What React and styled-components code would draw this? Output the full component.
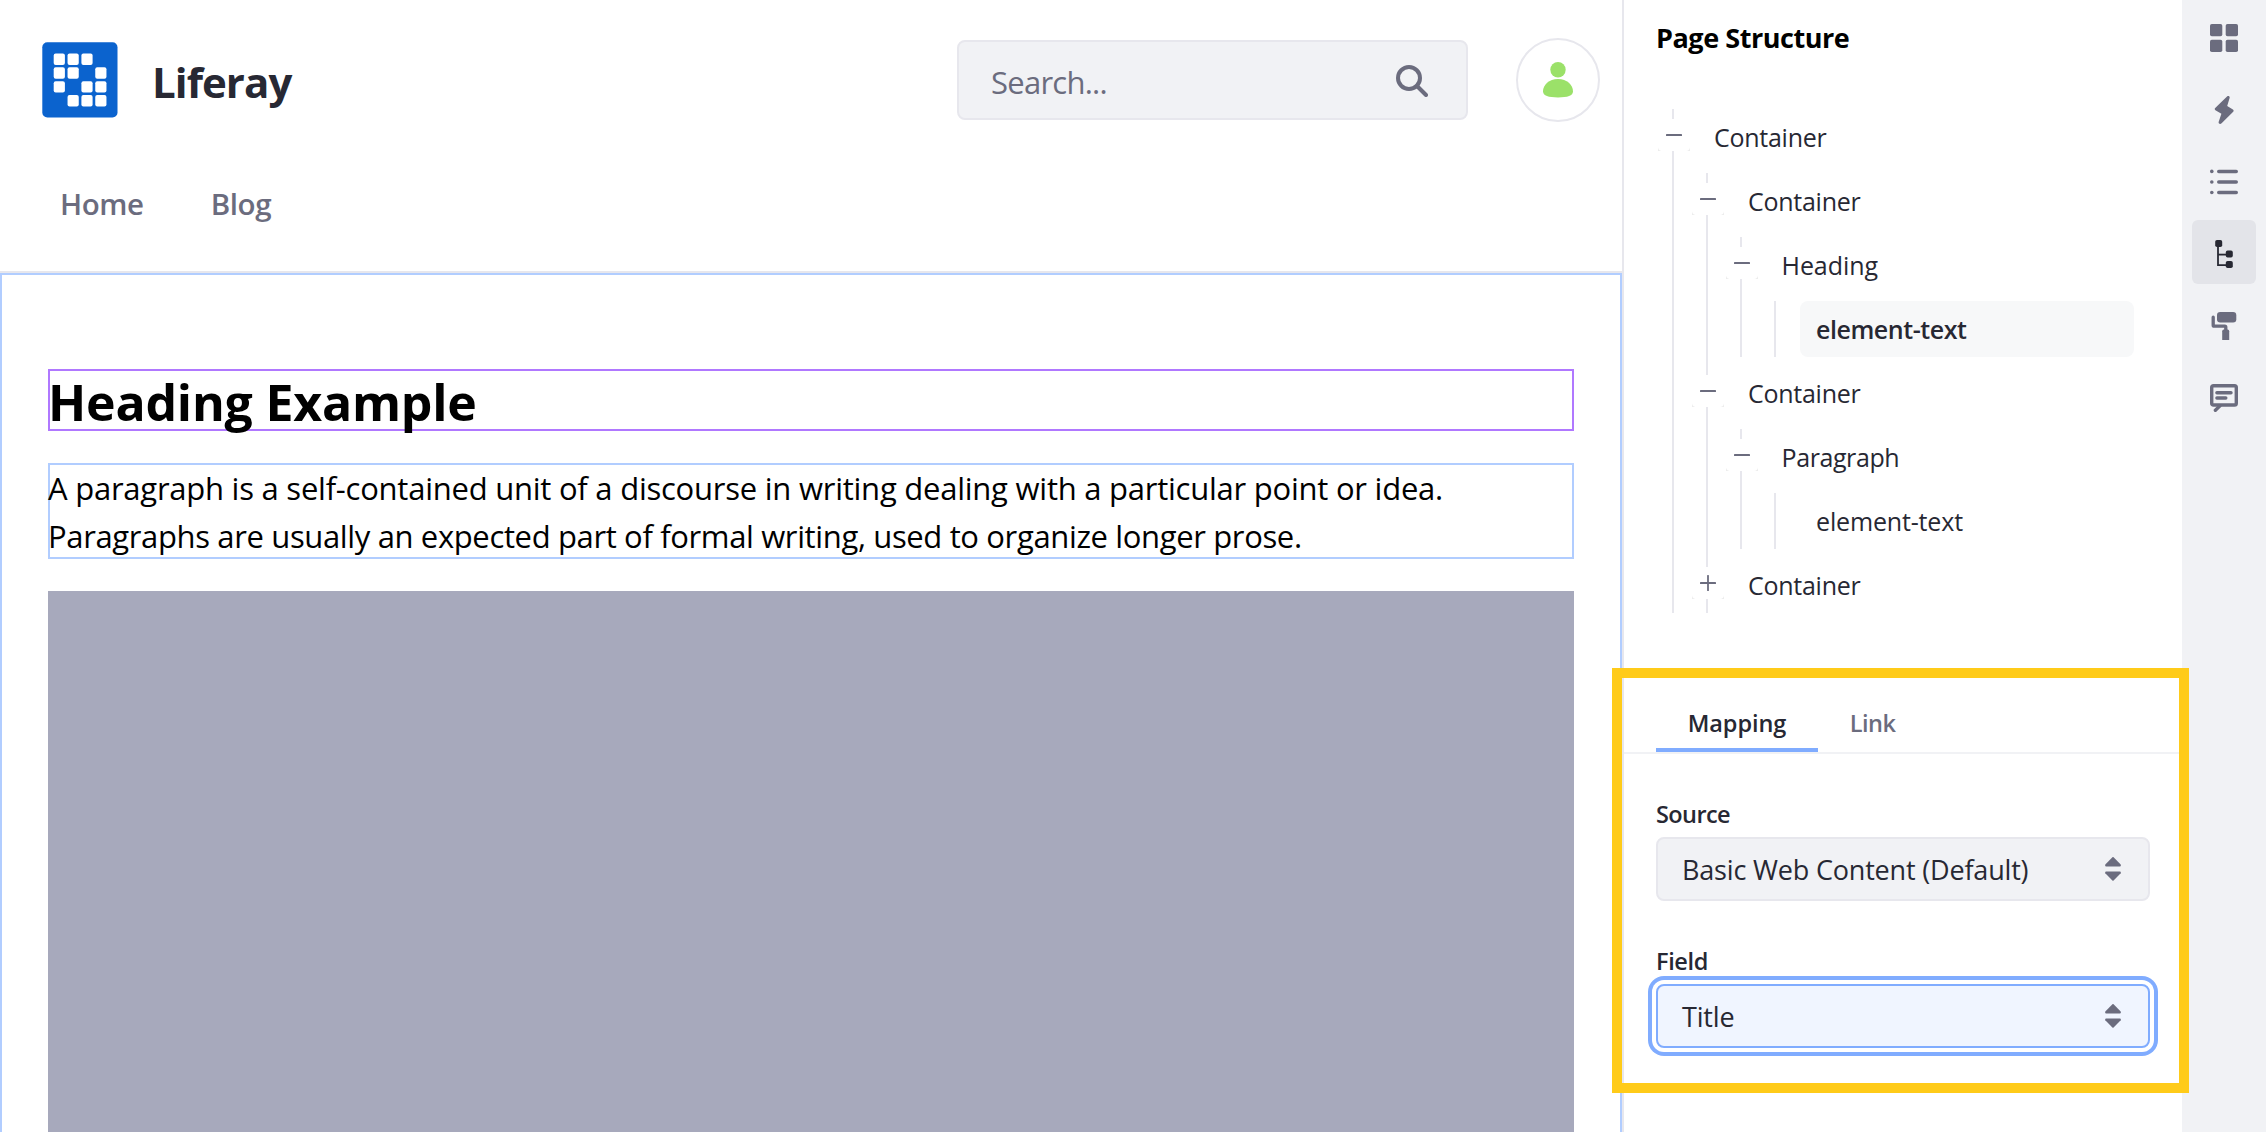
import React from 'react';
import styled, { createGlobalStyle, css } from 'styled-components';

const GlobalStyle = createGlobalStyle`
  *, *::before, *::after { box-sizing: border-box; }
  body {
    margin: 0;
    background: #fff;
    color: #272833;
    font-family: "Open Sans", "Noto Sans", sans-serif;
    overflow: hidden;
  }
  h1, h2, p { margin: 0; }
  button { font: inherit; border: 0; padding: 0; }
`;

const Layout = styled.div`
  position: relative;
  display: grid;
  grid-template-columns: 1622px 560px 84px;
  width: 2266px;
  height: 1132px;
  overflow: hidden;
`;

/* ---------- page canvas ---------- */

const Canvas = styled.main`
  display: flex;
  flex-direction: column;
  height: 1132px;
  min-width: 0;
  overflow: hidden;
`;

const SiteHeader = styled.header`
  flex: none;
  height: 273px;
  border-bottom: 2px solid #e7e7ed;
`;

const Brand = styled.div`
  display: flex;
  align-items: center;
  height: 160px;
  padding: 0 22px 0 42px;
`;

const SiteName = styled.span`
  flex: 1;
  padding: 3px 0 0 34px;
  font-size: 42px;
  font-weight: 700;
  line-height: 60px;
  letter-spacing: -0.94px;
`;

const SearchBox = styled.div`
  display: flex;
  align-items: center;
  justify-content: space-between;
  width: 511px;
  height: 80px;
  margin-right: 48px;
  padding: 0 38px 0 32px;
  border: 2px solid #e7e7ed;
  border-radius: 8px;
  background: #f1f2f5;
  color: #6b6c7e;
  font-size: 31px;
  letter-spacing: -0.75px;

  span { padding-top: 4px; }
  svg { margin-top: 2px; }
`;

const Avatar = styled.div`
  display: flex;
  align-items: center;
  justify-content: center;
  width: 84px;
  height: 84px;
  border: 2px solid #e7e7ed;
  border-radius: 50%;
`;

const SiteNav = styled.nav`
  display: flex;
  gap: 67px;
  padding: 23px 0 0 60px;
  color: #6b6c7e;
  font-size: 29.5px;
  font-weight: 600;
  line-height: 42px;
  letter-spacing: -0.4px;
`;

const Fragment = styled.section`
  flex: 1;
  padding: 94px 46px 0;
  border: 2px solid #b1cdff;
  border-bottom: 0;
`;

const HeadingBox = styled.div`
  height: 62px;
  border: 2px solid #b078ff;

  h1 {
    padding-top: 2px;
    margin-left: -2px;
    color: #000;
    font-size: 50px;
    font-weight: 700;
    line-height: 58px;
    letter-spacing: -0.2px;
  }
`;

const ParagraphBox = styled.div`
  height: 96px;
  margin-top: 32px;
  border: 2px solid #b1cdff;
  color: #000;
  font-size: 31px;
  line-height: 48px;
`;

const TextLine = styled.p`
  margin-top: ${p => (p.$first ? -1 : 0)}px;
  margin-left: ${p => p.$shift || 0}px;
  letter-spacing: ${p => p.$track}px;
  white-space: nowrap;
`;

const ImagePlaceholder = styled.div`
  height: 560px;
  margin-top: 32px;
  background: #a7a9bc;
`;

/* ---------- structure panel ---------- */

const Panel = styled.aside`
  display: flex;
  flex-direction: column;
  border-left: 2px solid #e7e7ed;
`;

const PanelTitle = styled.h2`
  height: 109px;
  padding: 18px 0 0 32px;
  color: #000;
  font-size: 27px;
  font-weight: 700;
  line-height: 40px;
  letter-spacing: -0.45px;
`;

const TreeArea = styled.div`
  height: 569px;
  padding: 0 48px 0 48px;
`;

const Group = styled.div`
  display: flex;
  flex-direction: column;
  gap: 8px;
  border-left: 2px solid #e7e7ed;
`;

const Node = styled.div`
  display: flex;
  flex-direction: column;
  gap: 8px;

  > ${Group} { margin-left: 32px; }
`;

const Row = styled.div`
  display: flex;
  align-items: flex-start;
  height: 56px;
`;

const Toggle = styled.button`
  display: flex;
  justify-content: center;
  width: 32px;
  height: 32px;
  margin: 10px 8px 0 -16px;
  padding-top: 8px;
  background:
    radial-gradient(circle at 100% 0, #fff 3.5px, #ececec 4.5px) left bottom / 4px 4px no-repeat,
    radial-gradient(circle at 0 0, #fff 3.5px, #ececec 4.5px) right bottom / 4px 4px no-repeat,
    #fff;
  color: #6b6c7e;
`;

const Label = styled.div`
  flex: 1;
  height: 56px;
  margin-left: ${p => (p.$leaf ? 24 : 0)}px;
  padding-left: ${p => 16 + (p.$shift || 0)}px;
  border-radius: 8px;
  font-size: 25px;
  line-height: 57px;
  letter-spacing: ${p => p.$track}px;
  ${p => p.$selected && css`
    background: #f7f8f9;
    font-weight: 600;
  `}
`;

const TabBar = styled.div`
  display: flex;
  height: 76px;
  padding-left: 32px;
  border-bottom: 2px solid #f1f2f5;
`;

const Tab = styled.button`
  height: 74px;
  width: ${p => p.$width}px;
  padding-top: 20px;
  border-bottom: 4px solid ${p => (p.$active ? '#80acff' : 'transparent')};
  background: none;
  color: ${p => (p.$active ? '#272833' : '#6b6c7e')};
  font-size: 23.5px;
  font-weight: 600;
  line-height: 50px;
  letter-spacing: ${p => p.$track || 0}px;
`;

const Form = styled.div`
  display: flex;
  flex-direction: column;
  gap: 43px;
  padding: 43px 32px 0;
`;

const Field = styled.div`
  display: flex;
  flex-direction: column;
`;

const FieldLabel = styled.label`
  height: 40px;
  font-size: 23.5px;
  font-weight: 600;
  line-height: 35px;
  letter-spacing: ${p => p.$track}px;
`;

const Select = styled.div`
  display: flex;
  align-items: center;
  justify-content: space-between;
  height: 64px;
  padding: 0 27px 0 24px;
  border: 2px solid ${p => (p.$focused ? '#80acff' : '#e7e7ed')};
  border-radius: 8px;
  background: ${p => (p.$focused ? '#f0f5ff' : '#f1f2f5')};
  box-shadow: ${p => (p.$focused ? '0 0 0 4px #fff, 0 0 0 8px #80acff' : 'none')};
  font-size: 27px;
  letter-spacing: -0.18px;
`;

const Highlight = styled.div`
  position: absolute;
  left: 1612px;
  top: 668px;
  width: 577px;
  height: 425px;
  border: 10px solid #ffcb19;
`;

/* ---------- icon rail ---------- */

const Rail = styled.nav`
  display: flex;
  flex-direction: column;
  align-items: center;
  gap: 8px;
  padding-top: 4px;
  background: #f1f2f5;
`;

const RailButton = styled.button`
  display: flex;
  justify-content: center;
  width: 64px;
  height: 64px;
  padding-top: 20px;
  border-radius: 6px;
  background: ${p => (p.$active ? '#e3e4e9' : 'transparent')};
  color: ${p => (p.$active ? '#272833' : '#6b6c7e')};
`;

/* ---------- icons ---------- */

const LogoIcon = () => {
  const cells = [[0, 0], [1, 0], [2, 0], [0, 1], [1, 1], [3, 1], [0, 2], [2, 2], [3, 2], [1, 3], [2, 3], [3, 3]];
  return (
    <svg width="76" height="76" viewBox="0 0 76 76">
      <rect x="0.3" y="0.2" width="75.2" height="75.2" rx="5" fill="#0b63ce" />
      {cells.map(([x, y]) => (
        <rect key={`${x}${y}`} x={11.7 + x * 13.85} y={11.5 + y * 13.85} width="11.2" height="11.4" rx="2" fill="#fff" />
      ))}
    </svg>
  );
};

const SearchIcon = () => (
  <svg width="32" height="32" viewBox="0 0 32 32" fill="none" stroke="#6b6c7e" strokeWidth="4">
    <circle cx="13" cy="13" r="11" />
    <path d="M21 21l9 9" strokeLinecap="round" />
  </svg>
);

const UserIcon = () => (
  <svg width="30" height="36" viewBox="0 0 30 36" fill="#9be169">
    <circle cx="15" cy="7.7" r="7.7" />
    <path d="M15 17C24 17 30 23 30 29.3C30 34 24.5 35.4 15 35.4S0 34 0 29.3C0 23 6 17 15 17Z" />
  </svg>
);

const SignIcon = ({ plus }) => (
  <svg width="16" height="16" viewBox="0 0 16 16" fill="currentColor">
    <rect x="0" y="7" width="16" height="2" rx="0.6" />
    {plus && <rect x="7.1" y="0" width="1.8" height="16" rx="0.6" />}
  </svg>
);

const CaretDouble = () => (
  <svg width="16" height="24" viewBox="0 0 16 24" fill="#6b6c7e">
    <path d="M7.4 0.3Q8 -0.2 8.6 0.3L15.7 7.6Q16.3 9.2 14.8 9.4H1.2Q-0.3 9.2 0.3 7.6Z" />
    <path d="M7.4 23.5Q8 24 8.6 23.5L15.7 16.2Q16.3 14.6 14.8 14.4H1.2Q-0.3 14.6 0.3 16.2Z" />
  </svg>
);

const GlyphBox = ({ children }) => (
  <svg width="28" height="28" viewBox="0 0 28 28" fill="currentColor">{children}</svg>
);

const CardsIcon = () => (
  <GlyphBox>
    <rect x="0" y="0" width="12.3" height="12.3" rx="1.8" />
    <rect x="15.7" y="0" width="12.3" height="12.3" rx="1.8" />
    <rect x="0" y="15.7" width="12.3" height="12.3" rx="1.8" />
    <rect x="15.7" y="15.7" width="12.3" height="12.3" rx="1.8" />
  </GlyphBox>
);

const BoltIcon = () => (
  <GlyphBox>
    <path d="M17.3 0.3C18.8-0.4 20 0.5 19.6 2L17.2 10.1L22.9 13.6C23.8 14.2 23.8 15 23.2 15.8L11.6 27.3C10.1 28.7 8.1 27.6 8.7 25.7L11.4 17.8L5.4 14.2C4.5 13.6 4.5 12.7 5.2 11.9Z" />
  </GlyphBox>
);

const ListIcon = () => (
  <GlyphBox>
    {[3.4, 14, 24.5].map(y => (
      <g key={y}>
        <circle cx="1.8" cy={y} r="1.8" />
        <rect x="7" y={y - 1.75} width="21" height="3.5" rx="1.75" />
      </g>
    ))}
  </GlyphBox>
);

const TreeIcon = () => (
  <GlyphBox>
    <path d="M8 6V25.2H17" fill="none" stroke="currentColor" strokeWidth="1.8" />
    <path d="M8 14.6H17" stroke="currentColor" strokeWidth="1.8" />
    <rect x="5.2" y="0" width="7" height="7" rx="1.8" />
    <rect x="15.8" y="10.6" width="7" height="7" rx="1.8" />
    <rect x="15.8" y="21" width="7" height="7" rx="1.8" />
  </GlyphBox>
);

const RollerIcon = () => (
  <GlyphBox>
    <rect x="7" y="0" width="19.3" height="10.4" rx="3.2" />
    <path d="M3.2 5.2V13.2Q3.2 14.2 4.2 14.2H14.8Q15.8 14.2 15.8 15.2V19" fill="none" stroke="currentColor" strokeWidth="3.3" strokeLinecap="round" />
    <path d="M12.2 19.2Q12.2 17.6 13.8 17.6H17.6Q19.2 17.6 19.2 19.2V28H12.2Z" />
  </GlyphBox>
);

const CommentIcon = () => (
  <GlyphBox>
    <path d="M3.5 1.7H24.5Q26.3 1.7 26.3 3.5V19.2Q26.3 21 24.5 21H3.5Q1.7 21 1.7 19.2V3.5Q1.7 1.7 3.5 1.7Z" fill="none" stroke="currentColor" strokeWidth="3.4" />
    <path d="M10 21.8L5.4 26.2" stroke="currentColor" strokeWidth="3.4" strokeLinecap="round" />
    <rect x="5.2" y="7" width="17.5" height="3.4" rx="1.7" />
    <rect x="5.2" y="12.3" width="12.3" height="3.4" rx="1.7" />
  </GlyphBox>
);

/* ---------- data ---------- */

const tree = {
  label: 'Container', track: -0.26, children: [
    {
      label: 'Container', track: -0.26, children: [
        {
          label: 'Heading', track: -0.05, shift: -0.5,
          children: [{ label: 'element-text', track: -0.45, selected: true }],
        },
      ],
    },
    {
      label: 'Container', track: -0.26, children: [
        {
          label: 'Paragraph', track: -0.4, shift: -0.5,
          children: [{ label: 'element-text', track: -0.16 }],
        },
      ],
    },
    { label: 'Container', track: -0.26, collapsed: true },
  ],
};

const rail = [
  { icon: CardsIcon },
  { icon: BoltIcon },
  { icon: ListIcon },
  { icon: TreeIcon, active: true },
  { icon: RollerIcon },
  { icon: CommentIcon },
];

function TreeNode({ node }) {
  const leaf = !node.children && !node.collapsed;
  return (
    <Node>
      <Row>
        {!leaf && <Toggle><SignIcon plus={node.collapsed} /></Toggle>}
        <Label $leaf={leaf} $selected={node.selected} $track={node.track} $shift={node.shift}>
          {node.label}
        </Label>
      </Row>
      {node.children && (
        <Group>
          {node.children.map((child, i) => <TreeNode key={i} node={child} />)}
        </Group>
      )}
    </Node>
  );
}

export default function App() {
  return (
    <>
      <GlobalStyle />
      <Layout>
        <Canvas>
          <SiteHeader>
            <Brand>
              <LogoIcon />
              <SiteName>Liferay</SiteName>
              <SearchBox>
                <span>Search...</span>
                <SearchIcon />
              </SearchBox>
              <Avatar><UserIcon /></Avatar>
            </Brand>
            <SiteNav>
              <span>Home</span>
              <span>Blog</span>
            </SiteNav>
          </SiteHeader>
          <Fragment>
            <HeadingBox><h1>Heading Example</h1></HeadingBox>
            <ParagraphBox>
              <TextLine $first $track={-0.24} $shift={-2}>A paragraph is a self-contained unit of a discourse in writing dealing with a particular point or idea.</TextLine>
              <TextLine $track={-0.36} $shift={-2}>Paragraphs are usually an expected part of formal writing, used to organize longer prose.</TextLine>
            </ParagraphBox>
            <ImagePlaceholder />
          </Fragment>
        </Canvas>

        <Panel>
          <PanelTitle>Page Structure</PanelTitle>
          <TreeArea>
            <Group><TreeNode node={tree} /></Group>
          </TreeArea>
          <TabBar>
            <Tab $active $width={162} $track={-0.05}>Mapping</Tab>
            <Tab $width={109} $track={-0.5}>Link</Tab>
          </TabBar>
          <Form>
            <Field>
              <FieldLabel $track={-0.6}>Source</FieldLabel>
              <Select><span>Basic Web Content (Default)</span><CaretDouble /></Select>
            </Field>
            <Field>
              <FieldLabel $track={-0.35}>Field</FieldLabel>
              <Select $focused><span>Title</span><CaretDouble /></Select>
            </Field>
          </Form>
        </Panel>

        <Rail>
          {rail.map(({ icon: Icon, active }, i) => (
            <RailButton key={i} $active={active}><Icon /></RailButton>
          ))}
        </Rail>
        <Highlight />
      </Layout>
    </>
  );
}
